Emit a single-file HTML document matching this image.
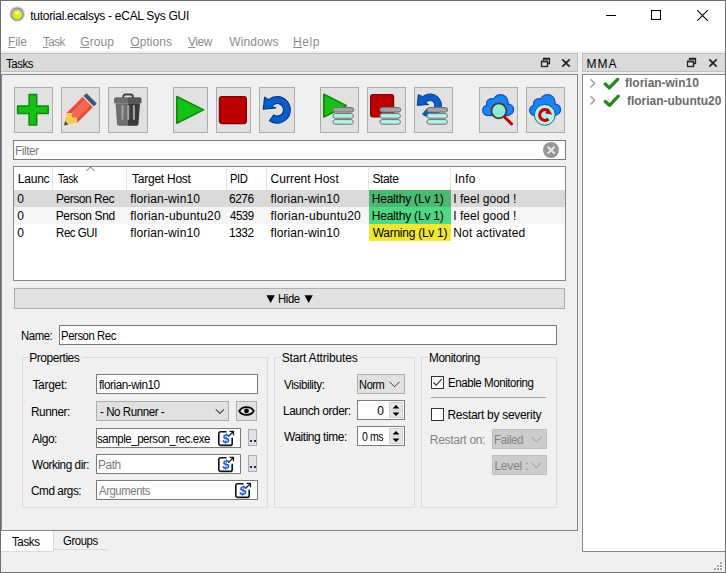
<!DOCTYPE html>
<html><head><meta charset="utf-8">
<style>
html,body{margin:0;padding:0;}
body{width:726px;height:573px;position:relative;overflow:hidden;background:#f0f0f0;font-family:"Liberation Sans",sans-serif;font-size:12px;color:#000;}
.a{position:absolute;box-sizing:border-box;}
.t{position:absolute;white-space:pre;font-size:12px;line-height:14px;letter-spacing:-0.3px;}
.btn{position:absolute;box-sizing:border-box;top:87px;height:46px;background:#e1e1e1;border:1px solid #adadad;}
.btn svg{position:absolute;left:0;top:0;}
.inp{position:absolute;box-sizing:border-box;background:#fff;border:1px solid #7a7a7a;}
.cmb{position:absolute;box-sizing:border-box;background:#e1e1e1;border:1px solid #adadad;}
.grp{position:absolute;box-sizing:border-box;border:1px solid #dcdcdc;}
.ul{text-decoration:underline;text-underline-offset:1px;}
</style></head><body>
<!-- window border -->
<div class="a" style="left:0;top:0;width:726px;height:573px;border:1px solid #6f6f6f;"></div>
<!-- title bar -->
<div class="a" style="left:1px;top:1px;width:724px;height:50px;background:#fff;"></div>
<svg class="a" style="left:9px;top:6px" width="17" height="17" viewBox="0 0 17 17">
  <circle cx="8.2" cy="8" r="7.8" fill="#d4d4d4"/><circle cx="8.2" cy="8" r="6.6" fill="#8c8c8c"/><circle cx="8.2" cy="8" r="5.6" fill="#b8b8b0"/>
  <circle cx="8.2" cy="8.8" r="4.4" fill="#e6ee00"/><ellipse cx="8.2" cy="6.8" rx="2.6" ry="1.8" fill="#f4f880"/>
</svg>
<div class="t" style="left:30.30px;top:9px;letter-spacing:-0.287px;">tutorial.ecalsys - eCAL Sys GUI</div>
<!-- window controls -->
<div class="a" style="left:606px;top:15px;width:10px;height:1px;background:#000;"></div>
<div class="a" style="left:651px;top:10px;width:10px;height:10px;border:1px solid #000;"></div>
<svg class="a" style="left:697px;top:10px" width="11" height="11" viewBox="0 0 11 11"><path d="M0.3 0.3L10.7 10.7M10.7 0.3L0.3 10.7" stroke="#000" stroke-width="1.05"/></svg>
<!-- menu -->
<div class="t" style="left:8.10px;top:35px;color:#8c8c8c;letter-spacing:-0.133px;"><span class="ul">F</span>ile</div>
<div class="t" style="left:42.70px;top:35px;color:#8c8c8c;letter-spacing:-0.450px;transform:scaleX(0.9556);transform-origin:0px 0;"><span class="ul">T</span>ask</div>
<div class="t" style="left:80.30px;top:35px;color:#8c8c8c;letter-spacing:0.050px;"><span class="ul">G</span>roup</div>
<div class="t" style="left:130.30px;top:35px;color:#8c8c8c;letter-spacing:0.050px;"><span class="ul">O</span>ptions</div>
<div class="t" style="left:188.30px;top:35px;color:#8c8c8c;letter-spacing:-0.450px;transform:scaleX(0.9980);transform-origin:0px 0;"><span class="ul">V</span>iew</div>
<div class="t" style="left:229.30px;top:35px;color:#8c8c8c;letter-spacing:0.067px;">Windows</div>
<div class="t" style="left:293.10px;top:35px;color:#8c8c8c;letter-spacing:0.533px;"><span class="ul">H</span>elp</div>


<!-- toolbar -->
<div class="btn" style="left:14px;width:39px;"><svg width="39" height="46" viewBox="0 0 39 46">
<path d="M14.1 6.5H21.7V18H33.2V25.6H21.7V37.1H14.1V25.6H2.6V18H14.1Z" fill="#17c017" stroke="#0a8a0a" stroke-width="1.5" stroke-linejoin="round"/></svg></div>
<div class="btn" style="left:61px;width:39px;"><svg width="39" height="46" viewBox="0 0 39 46">
<path d="M2.1 37.5L4.6 25H10.05V29.6H15.1V34.6Z" fill="#fdc94f"/>
<path d="M2.1 37.5L3.1 33.1L6.3 36.5Z" fill="#2e4a5e"/>
<path d="M4.6 25L20.8 8.8L23.5 11.5L10.05 25Z" fill="#e84c3d"/>
<path d="M10.05 25L23.5 11.5L28.35 16.35L15.1 29.6H10.05Z" fill="#f46652"/>
<path d="M15.1 29.6L28.35 16.35L31 19L15.1 34.9Z" fill="#e84c3d"/>
<path d="M10.3 24.7L23.3 11.7M15.35 29.35L28.2 16.5" stroke="#f7866e" stroke-width="0.5"/>
<path d="M20.8 8.8L31 19L31.7 18.3L21.5 8.1Z" fill="#eeeeee"/>
<path d="M21.5 8.1L23.8 5.8Q24.5 5.1 25.2 5.8L34.3 14.9Q35 15.6 34.3 16.3L31.7 18.3Z" fill="#3e5870"/>
</svg></div>
<div class="btn" style="left:108px;width:40px;"><svg width="40" height="46" viewBox="0 0 40 46"><g transform="translate(-1,-0.8)">
<path d="M15.3 11.5v-2.2a2 2 0 0 1 2-2h5.5a2 2 0 0 1 2 2v2.2" fill="none" stroke="#404040" stroke-width="2"/>
<path d="M6 12a2 2 0 0 1 2-2h12v6h-14z" fill="#6e6e6e"/><path d="M20 10h11.5a2 2 0 0 1 2 2v4h-13.5z" fill="#575757"/>
<path d="M7.5 16h12.5v22.5h-9a2 2 0 0 1-2-2z" fill="#6e6e6e"/><path d="M20 16h12l-1.5 20.5a2 2 0 0 1-2 2h-8.5z" fill="#3a3a3a"/>
<rect x="13.5" y="17.8" width="2" height="15" rx="1" fill="#a3a3ad"/><rect x="19.2" y="17.8" width="2" height="15" rx="1" fill="#a3a3ad"/><rect x="24.9" y="17.8" width="2" height="15" rx="1" fill="#a3a3ad"/></g></svg></div>

<div class="btn" style="left:173px;width:35px;"><svg width="35" height="46" viewBox="0 0 35 46">
<path d="M2.8 8.5V35.3L29.6 21.9z" fill="#17c017" stroke="#0a8a0a" stroke-width="1.6" stroke-linejoin="round"/></svg></div>
<div class="btn" style="left:216px;width:35px;"><svg width="35" height="46" viewBox="0 0 35 46">
<rect x="2.4" y="8.6" width="27" height="27" rx="2.5" fill="#ba0000" stroke="#800000" stroke-width="1.2"/></svg></div>
<div class="btn" style="left:259px;width:36px;"><svg width="36" height="46" viewBox="0 0 36 46">
<path d="M9.4 32.8A13.3 13.3 0 1 0 8.62 11.6L4.6 9.1L3.2 21.3L15.9 19.9L11.9 18.7A6.2 6.2 0 1 1 13.74 26.88Z" fill="#0a5cc8" stroke="#00368e" stroke-width="1.1" stroke-linejoin="round"/></svg></div>

<div class="btn" style="left:320px;width:39px;"><svg width="39" height="46" viewBox="0 0 39 46">
<path d="M2.8 6.3V29L25.5 17.6z" fill="#17c017" stroke="#0a8a0a" stroke-width="1.6" stroke-linejoin="round"/><path d="M14.2 19.5h16.2a2.3 2.3 0 0 1 0 4.6h-16.2a2.3 2.3 0 0 1 0-4.6z" fill="#a3a3a3" stroke="#707070" stroke-width="1"/>
<rect x="11.9" y="25.6" width="20.5" height="4.6" rx="2.3" fill="#b0f4e6" stroke="#707070" stroke-width="1"/>
<rect x="11.9" y="31.6" width="20.5" height="4.6" rx="2.3" fill="#b0f4e6" stroke="#707070" stroke-width="1"/></svg></div>
<div class="btn" style="left:367px;width:39px;"><svg width="39" height="46" viewBox="0 0 39 46">
<rect x="2.6" y="6.6" width="23" height="22.4" rx="2.5" fill="#ba0000" stroke="#800000" stroke-width="1.2"/><path d="M14.2 19.5h16.2a2.3 2.3 0 0 1 0 4.6h-16.2a2.3 2.3 0 0 1 0-4.6z" fill="#a3a3a3" stroke="#707070" stroke-width="1"/>
<rect x="11.9" y="25.6" width="20.5" height="4.6" rx="2.3" fill="#b0f4e6" stroke="#707070" stroke-width="1"/>
<rect x="11.9" y="31.6" width="20.5" height="4.6" rx="2.3" fill="#b0f4e6" stroke="#707070" stroke-width="1"/></svg></div>
<div class="btn" style="left:414px;width:39px;"><svg width="39" height="46" viewBox="0 0 39 46">
<path d="M7.61 26.21A11.5 11.5 0 1 0 7.61 8.59L3.3 6.7L2.3 17.4L13.5 16.5L10.84 15A4.8 4.8 0 1 1 11.91 21.08Z" fill="#0a5cc8" stroke="#003e96" stroke-width="1" stroke-linejoin="round"/><path d="M14.2 19.5h16.2a2.3 2.3 0 0 1 0 4.6h-16.2a2.3 2.3 0 0 1 0-4.6z" fill="#a3a3a3" stroke="#707070" stroke-width="1"/>
<rect x="11.9" y="25.6" width="20.5" height="4.6" rx="2.3" fill="#b0f4e6" stroke="#707070" stroke-width="1"/>
<rect x="11.9" y="31.6" width="20.5" height="4.6" rx="2.3" fill="#b0f4e6" stroke="#707070" stroke-width="1"/></svg></div>

<div class="btn" style="left:479px;width:39px;"><svg width="39" height="46" viewBox="0 0 39 46"><g fill="#1a84f4" stroke="#0a50c0" stroke-width="2.4"><circle cx="7.8" cy="22.3" r="4.6"/><circle cx="11.6" cy="15.8" r="4.5"/><circle cx="20.5" cy="14.3" r="7"/><circle cx="28.2" cy="21.6" r="4.8"/><rect x="7.8" y="17" width="20.4" height="9.9"/></g><g fill="#1a84f4"><circle cx="7.8" cy="22.3" r="4.6"/><circle cx="11.6" cy="15.8" r="4.5"/><circle cx="20.5" cy="14.3" r="7"/><circle cx="28.2" cy="21.6" r="4.8"/><rect x="7.8" y="17" width="20.4" height="9.9"/></g>
<line x1="24.5" y1="29" x2="31.5" y2="35.8" stroke="#c00000" stroke-width="3" stroke-linecap="round"/>
<circle cx="18.9" cy="22.8" r="7.5" fill="#90ead8" stroke="#404040" stroke-width="1.8"/></svg></div>
<div class="btn" style="left:526px;width:39px;"><svg width="39" height="46" viewBox="0 0 39 46"><g fill="#1a84f4" stroke="#0a50c0" stroke-width="2.4"><circle cx="7.8" cy="22.3" r="4.6"/><circle cx="11.6" cy="15.8" r="4.5"/><circle cx="20.5" cy="14.3" r="7"/><circle cx="28.2" cy="21.6" r="4.8"/><rect x="7.8" y="17" width="20.4" height="9.9"/></g><g fill="#1a84f4"><circle cx="7.8" cy="22.3" r="4.6"/><circle cx="11.6" cy="15.8" r="4.5"/><circle cx="20.5" cy="14.3" r="7"/><circle cx="28.2" cy="21.6" r="4.8"/><rect x="7.8" y="17" width="20.4" height="9.9"/></g>
<circle cx="17.8" cy="26.9" r="10.4" fill="#b4f0e6" stroke="#106050" stroke-width="0.9"/>
<path d="M21.4 22.94A5.3 5.3 0 1 0 21.4 31.06" fill="none" stroke="#c80010" stroke-width="3.2"/><path d="M21.2 20.3L25.3 26.6L18.3 25.6z" fill="#c80010"/></svg></div>

<!-- filter -->
<div class="inp" style="left:13px;top:140px;width:553px;height:20px;"></div>
<div class="t" style="left:14.60px;top:144px;color:#7a7a7a;letter-spacing:-0.450px;transform:scaleX(0.9853);transform-origin:1px 0;">Filter</div>
<svg class="a" style="left:543px;top:142px" width="16" height="16" viewBox="0 0 16 16"><circle cx="8" cy="8" r="8" fill="#979797"/><path d="M4.6 4.6L11.6 11.6M11.6 4.6L4.6 11.6" stroke="#ececec" stroke-width="2"/></svg>

<!-- table -->
<div class="a" style="left:13px;top:166px;width:553px;height:115px;background:#fff;border:1px solid #828790;"></div>
<div class="a" style="left:52px;top:167px;width:1px;height:23px;background:#e5e5e5;"></div>
<div class="a" style="left:126px;top:167px;width:1px;height:23px;background:#e5e5e5;"></div>
<div class="a" style="left:226px;top:167px;width:1px;height:23px;background:#e5e5e5;"></div>
<div class="a" style="left:266px;top:167px;width:1px;height:23px;background:#e5e5e5;"></div>
<div class="a" style="left:368px;top:167px;width:1px;height:23px;background:#e5e5e5;"></div>
<div class="a" style="left:450px;top:167px;width:1px;height:23px;background:#e5e5e5;"></div>
<svg class="a" style="left:86px;top:166px" width="9" height="6" viewBox="0 0 9 6"><path d="M0.5 5L4.5 1L8.5 5" fill="none" stroke="#606060" stroke-width="1"/></svg>
<div class="t" style="left:17.80px;top:172px;letter-spacing:-0.225px;">Launc</div>
<div class="t" style="left:58.00px;top:172px;letter-spacing:-0.450px;transform:scaleX(0.8668);transform-origin:0px 0;">Task</div>
<div class="t" style="left:132.10px;top:172px;letter-spacing:-0.250px;">Target Host</div>
<div class="t" style="left:230.20px;top:172px;letter-spacing:-0.450px;transform:scaleX(0.9337);transform-origin:1px 0;">PID</div>
<div class="t" style="left:270.50px;top:172px;letter-spacing:0.018px;">Current Host</div>
<div class="t" style="left:372.40px;top:172px;letter-spacing:-0.400px;">State</div>
<div class="t" style="left:454.80px;top:172px;letter-spacing:0.233px;">Info</div>

<div class="a" style="left:14px;top:190px;width:551px;height:17px;background:#d9d9d9;"></div>
<div class="a" style="left:14px;top:207px;width:551px;height:17px;background:#f5f5f5;"></div>
<div class="a" style="left:369px;top:190px;width:82px;height:17px;background:#4cb870;"></div>
<div class="a" style="left:369px;top:207px;width:82px;height:17px;background:#50d880;"></div>
<div class="a" style="left:369px;top:224px;width:82px;height:17px;background:#f0e830;"></div>

<div class="t" style="left:17.20px;top:192px;letter-spacing:0.000px;">0</div>
<div class="t" style="left:55.70px;top:192px;letter-spacing:-0.450px;transform:scaleX(0.9974);transform-origin:1px 0;">Person Rec</div>
<div class="t" style="left:130.30px;top:192px;letter-spacing:0.133px;">florian-win10</div>
<div class="t" style="left:229.20px;top:192px;letter-spacing:-0.450px;transform:scaleX(0.9894);transform-origin:1px 0;">6276</div>
<div class="t" style="left:270.50px;top:192px;letter-spacing:0.100px;">florian-win10</div>
<div class="t" style="left:371.70px;top:192px;letter-spacing:-0.200px;">Healthy (Lv 1)</div>
<div class="t" style="left:453.30px;top:192px;letter-spacing:0.025px;">I feel good !</div>

<div class="t" style="left:17.20px;top:209px;letter-spacing:0.000px;">0</div>
<div class="t" style="left:55.70px;top:209px;letter-spacing:-0.356px;">Person Snd</div>
<div class="t" style="left:130.30px;top:209px;letter-spacing:0.240px;">florian-ubuntu20</div>
<div class="t" style="left:230.20px;top:209px;letter-spacing:-0.450px;transform:scaleX(0.9493);transform-origin:0px 0;">4539</div>
<div class="t" style="left:270.50px;top:209px;letter-spacing:0.233px;">florian-ubuntu20</div>
<div class="t" style="left:371.70px;top:209px;letter-spacing:-0.200px;">Healthy (Lv 1)</div>
<div class="t" style="left:453.30px;top:209px;letter-spacing:0.025px;">I feel good !</div>

<div class="t" style="left:17.20px;top:226px;letter-spacing:0.000px;">0</div>
<div class="t" style="left:55.70px;top:226px;letter-spacing:-0.450px;transform:scaleX(0.9540);transform-origin:1px 0;">Rec GUI</div>
<div class="t" style="left:130.30px;top:226px;letter-spacing:0.133px;">florian-win10</div>
<div class="t" style="left:229.20px;top:226px;letter-spacing:-0.450px;transform:scaleX(0.9894);transform-origin:1px 0;">1332</div>
<div class="t" style="left:270.50px;top:226px;letter-spacing:0.100px;">florian-win10</div>
<div class="t" style="left:372.70px;top:226px;letter-spacing:-0.262px;">Warning (Lv 1)</div>
<div class="t" style="left:453.30px;top:226px;letter-spacing:0.158px;">Not activated</div>

<!-- hide bar -->
<div class="a" style="left:14px;top:288px;width:551px;height:21px;background:#e1e1e1;border:1px solid #adadad;"></div>
<svg class="a" style="left:266px;top:295px" width="10" height="9" viewBox="0 0 10 9"><path d="M0.5 0.3H8.8L4.65 8z" fill="#000"/></svg><div class="t" style="left:277.60px;top:292px;letter-spacing:-0.450px;transform:scaleX(0.9423);transform-origin:1px 0;">Hide</div><svg class="a" style="left:304px;top:295px" width="10" height="9" viewBox="0 0 10 9"><path d="M0.5 0.3H8.8L4.65 8z" fill="#000"/></svg>

<!-- name -->
<div class="t" style="left:20.90px;top:329px;letter-spacing:-0.450px;transform:scaleX(0.9455);transform-origin:1px 0;">Name:</div>
<div class="inp" style="left:59px;top:325px;width:498px;height:20px;"></div>
<div class="t" style="left:60.60px;top:329px;letter-spacing:-0.450px;transform:scaleX(0.9429);transform-origin:1px 0;">Person Rec</div>

<!-- Properties group -->
<div class="grp" style="left:22px;top:357px;width:246px;height:151px;"></div>
<div class="a" style="left:29px;top:352px;width:53px;height:12px;background:#f0f0f0;"></div>
<div class="t" style="left:29.20px;top:351px;letter-spacing:-0.450px;">Properties</div>
<div class="t" style="left:32.40px;top:378px;letter-spacing:-0.300px;">Target:</div>
<div class="inp" style="left:96px;top:374px;width:162px;height:20px;"></div>
<div class="t" style="left:99.20px;top:378px;letter-spacing:-0.450px;transform:scaleX(0.9744);transform-origin:0px 0;">florian-win10</div>
<div class="t" style="left:30.90px;top:405px;letter-spacing:-0.450px;transform:scaleX(0.9843);transform-origin:1px 0;">Runner:</div>
<div class="cmb" style="left:96px;top:401px;width:133px;height:20px;"></div>
<div class="t" style="left:100.40px;top:405px;letter-spacing:-0.450px;transform:scaleX(0.9610);transform-origin:0px 0;">- No Runner -</div>
<svg class="a" style="left:215px;top:408px" width="10" height="7" viewBox="0 0 10 7"><path d="M0.8 1.3L4.9 5.4L9 1.3" fill="none" stroke="#444" stroke-width="1.1"/></svg>
<div class="cmb" style="left:236px;top:401px;width:21px;height:20px;"></div>
<svg class="a" style="left:237px;top:405px" width="19" height="12" viewBox="0 0 19 12"><path d="M2.2 6C5.2 0.8 13.8 0.8 16.8 6C13.8 11.2 5.2 11.2 2.2 6Z" fill="none" stroke="#000" stroke-width="1.7"/><circle cx="9.5" cy="5.9" r="2.4" fill="#000"/></svg>

<div class="t" style="left:31.90px;top:432px;letter-spacing:-0.450px;">Algo:</div>
<div class="inp" style="left:96px;top:428px;width:145px;height:20px;overflow:hidden;"></div>
<div class="t" style="left:96.90px;top:432px;letter-spacing:-0.450px;transform:scaleX(0.9513);transform-origin:0px 0;">sample_person_rec.exe</div>
<div class="a" style="left:215px;top:429px;width:25px;height:18px;background:#fff;"></div><svg class="a" style="left:217px;top:429px" width="19" height="19" viewBox="0 0 19 19"><path d="M9.5 2.8H3.8a2 2 0 0 0-2 2v9.6a2 2 0 0 0 2 2h9.4a2 2 0 0 0 2-2V8.8" fill="none" stroke="#111" stroke-width="1.6"/><path d="M11.3 7.6L16.2 2.7M12.6 2.4H16.5V6.3" fill="none" stroke="#111" stroke-width="1.25"/><text x="8.6" y="13.6" text-anchor="middle" transform="skewX(-8) translate(1.8 0)" font-family="Liberation Sans" font-weight="bold" font-size="13" fill="#1c62d0">$</text></svg>
<div class="cmb" style="left:248px;top:429px;width:9px;height:17px;"></div><div class="a" style="left:250px;top:440px;width:2px;height:2px;background:#2a2a50;"></div><div class="a" style="left:254px;top:440px;width:2px;height:2px;background:#2a2a50;"></div>

<div class="t" style="left:31.80px;top:458px;letter-spacing:-0.450px;transform:scaleX(0.9785);transform-origin:0px 0;">Working dir:</div>
<div class="inp" style="left:96px;top:454px;width:145px;height:20px;"></div>
<div class="t" style="left:97.50px;top:458px;color:#7a7a7a;letter-spacing:-0.450px;transform:scaleX(0.9931);transform-origin:1px 0;">Path</div>
<svg class="a" style="left:217px;top:455px" width="19" height="19" viewBox="0 0 19 19"><path d="M9.5 2.8H3.8a2 2 0 0 0-2 2v9.6a2 2 0 0 0 2 2h9.4a2 2 0 0 0 2-2V8.8" fill="none" stroke="#111" stroke-width="1.6"/><path d="M11.3 7.6L16.2 2.7M12.6 2.4H16.5V6.3" fill="none" stroke="#111" stroke-width="1.25"/><text x="8.6" y="13.6" text-anchor="middle" transform="skewX(-8) translate(1.8 0)" font-family="Liberation Sans" font-weight="bold" font-size="13" fill="#1c62d0">$</text></svg>
<div class="cmb" style="left:248px;top:455px;width:9px;height:17px;"></div><div class="a" style="left:250px;top:466px;width:2px;height:2px;background:#2a2a50;"></div><div class="a" style="left:254px;top:466px;width:2px;height:2px;background:#2a2a50;"></div>

<div class="t" style="left:30.70px;top:484px;letter-spacing:-0.450px;transform:scaleX(0.9777);transform-origin:1px 0;">Cmd args:</div>
<div class="inp" style="left:96px;top:480px;width:162px;height:20px;"></div>
<div class="t" style="left:98.90px;top:484px;color:#7a7a7a;letter-spacing:-0.450px;transform:scaleX(0.9449);transform-origin:0px 0;">Arguments</div>
<svg class="a" style="left:234px;top:481px" width="19" height="19" viewBox="0 0 19 19"><path d="M9.5 2.8H3.8a2 2 0 0 0-2 2v9.6a2 2 0 0 0 2 2h9.4a2 2 0 0 0 2-2V8.8" fill="none" stroke="#111" stroke-width="1.6"/><path d="M11.3 7.6L16.2 2.7M12.6 2.4H16.5V6.3" fill="none" stroke="#111" stroke-width="1.25"/><text x="8.6" y="13.6" text-anchor="middle" transform="skewX(-8) translate(1.8 0)" font-family="Liberation Sans" font-weight="bold" font-size="13" fill="#1c62d0">$</text></svg>

<!-- Start attributes group -->
<div class="grp" style="left:274px;top:357px;width:141px;height:151px;"></div>
<div class="a" style="left:281px;top:352px;width:79px;height:12px;background:#f0f0f0;"></div>
<div class="t" style="left:281.70px;top:351px;letter-spacing:-0.180px;">Start Attributes</div>
<div class="t" style="left:283.70px;top:378px;letter-spacing:-0.450px;transform:scaleX(0.9759);transform-origin:0px 0;">Visibility:</div>
<div class="cmb" style="left:357px;top:374px;width:48px;height:20px;"></div>
<div class="t" style="left:359.40px;top:378px;letter-spacing:-0.450px;transform:scaleX(0.9193);transform-origin:1px 0;">Norm</div>
<svg class="a" style="left:389px;top:381px" width="11" height="7" viewBox="0 0 11 7"><path d="M0.5 0.8L5.5 5.8L10.5 0.8" fill="none" stroke="#333" stroke-width="1"/></svg>
<div class="t" style="left:282.70px;top:404px;letter-spacing:-0.450px;transform:scaleX(0.9925);transform-origin:1px 0;">Launch order:</div>
<div class="inp" style="left:357px;top:400px;width:48px;height:20px;"></div>
<div class="t" style="left:377.20px;top:404px;letter-spacing:0.000px;">0</div>
<div class="a" style="left:389px;top:402px;width:14px;height:16px;background:#e6e6e6;border:1px solid #d0d0d0;"></div><div class="a" style="left:389px;top:410px;width:14px;height:1px;background:#d0d0d0;"></div><svg class="a" style="left:392px;top:404px" width="8" height="13" viewBox="0 0 8 13"><path d="M0.5 4.5L4 1L7.5 4.5Z" fill="#000"/><path d="M0.5 8.5L4 12L7.5 8.5Z" fill="#000"/></svg>
<div class="t" style="left:283.70px;top:430px;letter-spacing:-0.450px;transform:scaleX(0.9952);transform-origin:0px 0;">Waiting time:</div>
<div class="inp" style="left:357px;top:426px;width:48px;height:20px;"></div>
<div class="t" style="left:361.80px;top:430px;letter-spacing:-0.450px;transform:scaleX(0.8763);transform-origin:0px 0;">0 ms</div>
<div class="a" style="left:389px;top:428px;width:14px;height:16px;background:#e6e6e6;border:1px solid #d0d0d0;"></div><div class="a" style="left:389px;top:436px;width:14px;height:1px;background:#d0d0d0;"></div><svg class="a" style="left:392px;top:430px" width="8" height="13" viewBox="0 0 8 13"><path d="M0.5 4.5L4 1L7.5 4.5Z" fill="#000"/><path d="M0.5 8.5L4 12L7.5 8.5Z" fill="#000"/></svg>

<!-- Monitoring group -->
<div class="grp" style="left:421px;top:357px;width:136px;height:151px;"></div>
<div class="a" style="left:428px;top:352px;width:53px;height:12px;background:#f0f0f0;"></div>
<div class="t" style="left:428.60px;top:351px;letter-spacing:-0.450px;transform:scaleX(0.9850);transform-origin:1px 0;">Monitoring</div>
<div class="a" style="left:431px;top:376px;width:13px;height:13px;background:#fff;border:1px solid #333;"></div>
<svg class="a" style="left:432px;top:377px" width="11" height="11" viewBox="0 0 11 11"><path d="M1.5 5.5L4.2 8.2L9.8 2.2" fill="none" stroke="#333" stroke-width="1.2"/></svg>
<div class="t" style="left:447.50px;top:376px;letter-spacing:-0.450px;transform:scaleX(0.9601);transform-origin:1px 0;">Enable Monitoring</div>
<div class="a" style="left:431px;top:397px;width:115px;height:1px;background:#a0a0a0;"></div>
<div class="a" style="left:431px;top:408px;width:13px;height:13px;background:#fff;border:1px solid #333;"></div>
<div class="t" style="left:447.50px;top:408px;letter-spacing:-0.300px;">Restart by severity</div>
<div class="t" style="left:429.80px;top:433px;color:#838383;letter-spacing:-0.300px;">Restart on:</div>
<div class="cmb" style="left:492px;top:429px;width:55px;height:20px;background:#cccccc;border-color:#bfbfbf;"></div>
<div class="t" style="left:494.40px;top:433px;color:#838383;letter-spacing:-0.450px;transform:scaleX(0.9704);transform-origin:1px 0;">Failed</div>
<svg class="a" style="left:531px;top:436px" width="11" height="7" viewBox="0 0 11 7"><path d="M0.5 0.8L5.5 5.8L10.5 0.8" fill="none" stroke="#999" stroke-width="1"/></svg>
<div class="cmb" style="left:492px;top:455px;width:55px;height:20px;background:#cccccc;border-color:#bfbfbf;"></div>
<div class="t" style="left:494.40px;top:459px;color:#838383;letter-spacing:-0.200px;">Level :</div>
<svg class="a" style="left:531px;top:462px" width="11" height="7" viewBox="0 0 11 7"><path d="M0.5 0.8L5.5 5.8L10.5 0.8" fill="none" stroke="#999" stroke-width="1"/></svg>

<!-- Tasks dock title -->
<div class="a" style="left:1px;top:53px;width:577px;height:19px;background:#dadada;border:1px solid #bfbfbf;border-left:none;"></div>
<div class="t" style="left:6.00px;top:57px;letter-spacing:-0.450px;transform:scaleX(0.9504);transform-origin:0px 0;">Tasks</div>
<!-- MMA dock title -->
<div class="a" style="left:582px;top:53px;width:143px;height:19px;background:#dadada;border:1px solid #bfbfbf;border-right:none;"></div>
<div class="t" style="left:586.60px;top:57px;letter-spacing:0.900px;">MMA</div>

<!-- Tasks frame -->
<div class="a" style="left:1px;top:74px;width:577px;height:457px;border:1px solid #828790;"></div>

<!-- MMA tree -->
<div class="a" style="left:582px;top:74px;width:143px;height:478px;background:#fff;border:1px solid #828790;border-right:none;"></div>


<!-- MMA tree items -->
<svg class="a" style="left:589px;top:78px" width="8" height="11" viewBox="0 0 8 11"><path d="M1.5 1.3L5.6 5.4L1.5 9.5" fill="none" stroke="#a4a4a4" stroke-width="1.6"/></svg>
<svg class="a" style="left:603px;top:77px" width="17" height="14" viewBox="0 0 17 14"><path d="M2.3 7L6.3 10.9L14.6 2.4" fill="none" stroke="#1e8c1e" stroke-width="3.3" stroke-linecap="round" stroke-linejoin="round"/></svg>
<div class="t" style="left:625.10px;top:76px;font-weight:bold;color:#6a6a6a;letter-spacing:-0.025px;">florian-win10</div>
<svg class="a" style="left:589px;top:95px" width="8" height="11" viewBox="0 0 8 11"><path d="M1.5 1.3L5.6 5.4L1.5 9.5" fill="none" stroke="#a4a4a4" stroke-width="1.6"/></svg>
<svg class="a" style="left:603px;top:94px" width="18" height="14" viewBox="0 0 18 14"><path d="M2.3 7.5L6.5 11.3L15.3 2.2" fill="none" stroke="#1e8c1e" stroke-width="3.3" stroke-linecap="round" stroke-linejoin="round"/></svg>
<div class="t" style="left:627.00px;top:94px;font-weight:bold;color:#6a6a6a;letter-spacing:-0.020px;">florian-ubuntu20</div>


<!-- dock buttons -->
<svg class="a" style="left:540px;top:57px" width="11" height="11" viewBox="0 0 11 11"><path d="M3.5 3.2V1.5H9.5V6.5H7.5" fill="none" stroke="#222" stroke-width="1.3"/><rect x="1.5" y="4.2" width="6" height="5.3" fill="none" stroke="#222" stroke-width="1.3"/><path d="M3.5 2.2H9.5M1.5 4.9H7.5" stroke="#222" stroke-width="1"/></svg>
<svg class="a" style="left:561px;top:58px" width="10" height="10" viewBox="0 0 10 10"><path d="M1.3 1.3L8.7 8.7M8.7 1.3L1.3 8.7" stroke="#222" stroke-width="1.7"/></svg>
<svg class="a" style="left:686px;top:57px" width="11" height="11" viewBox="0 0 11 11"><path d="M3.5 3.2V1.5H9.5V6.5H7.5" fill="none" stroke="#222" stroke-width="1.3"/><rect x="1.5" y="4.2" width="6" height="5.3" fill="none" stroke="#222" stroke-width="1.3"/><path d="M3.5 2.2H9.5M1.5 4.9H7.5" stroke="#222" stroke-width="1"/></svg>
<svg class="a" style="left:708px;top:58px" width="10" height="10" viewBox="0 0 10 10"><path d="M1.3 1.3L8.7 8.7M8.7 1.3L1.3 8.7" stroke="#222" stroke-width="1.7"/></svg>
<!-- size grip -->
<div class="a" style="left:720px;top:562px;width:2px;height:2px;background:#a8a8a8;"></div>
<div class="a" style="left:717px;top:565px;width:2px;height:2px;background:#a8a8a8;"></div>
<div class="a" style="left:720px;top:565px;width:2px;height:2px;background:#a8a8a8;"></div>
<div class="a" style="left:714px;top:568px;width:2px;height:2px;background:#a8a8a8;"></div>
<div class="a" style="left:717px;top:568px;width:2px;height:2px;background:#a8a8a8;"></div>
<div class="a" style="left:720px;top:568px;width:2px;height:2px;background:#a8a8a8;"></div>

<!-- bottom tabs -->
<div class="a" style="left:1px;top:531px;width:53px;height:21px;background:#fff;border-bottom:1px solid #d9d9d9;border-right:1px solid #d9d9d9;"></div>
<div class="t" style="left:12.00px;top:535px;letter-spacing:-0.450px;transform:scaleX(0.9681);transform-origin:0px 0;">Tasks</div>
<div class="a" style="left:53px;top:549px;width:55px;height:1px;background:#d9d9d9;"></div>
<div class="t" style="left:62.50px;top:534px;letter-spacing:-0.450px;transform:scaleX(0.9427);transform-origin:1px 0;">Groups</div>

</body></html>
